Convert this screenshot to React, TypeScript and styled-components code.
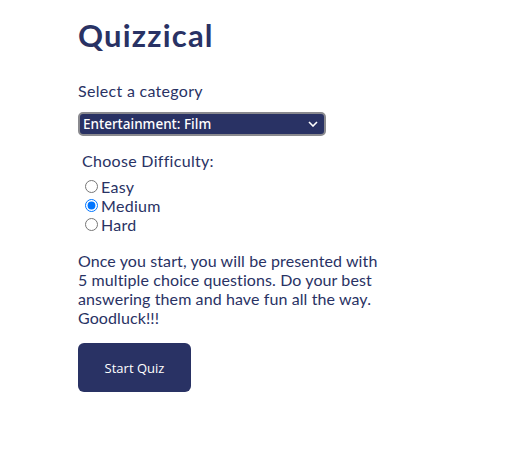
import React, { useState } from "react";
import styled, { createGlobalStyle } from "styled-components";

const Global = createGlobalStyle`
  html, body { margin: 0; padding: 0; background: #ffffff; }
  body { font-family: Lato, "Noto Sans", sans-serif; color: #293264; }
`;

const Page = styled.main`
  display: flex;
  flex-direction: column;
  align-items: flex-start;
  padding: 16px 0 0 78px;
  width: 310px;
`;

const Title = styled.h1`
  margin: 0;
  font-size: 31px;
  font-weight: 700;
  letter-spacing: 1.2px;
  line-height: 38px;
  color: #293264;
`;

const Label = styled.label`
  margin-top: 27px;
  font-size: 16px;
  line-height: 20px;
  letter-spacing: 0.3px;
`;

const Select = styled.select`
  box-sizing: border-box;
  margin-top: 11px;
  width: 248px;
  height: 24px;
  background: #293264;
  color: #ffffff;
  border: 2px solid #8a8a8f;
  border-radius: 5px;
  font-family: "Noto Sans", sans-serif;
  font-size: 13.5px;
  font-weight: 500;
  padding: 0 3px;
  appearance: none;
  background-image: url("data:image/svg+xml;utf8,<svg xmlns='http://www.w3.org/2000/svg' width='10' height='6' viewBox='0 0 10 6'><path d='M1 1l4 4 4-4' fill='none' stroke='white' stroke-width='1.6'/></svg>");
  background-repeat: no-repeat;
  background-position: right 6px center;
`;

const Fieldset = styled.fieldset`
  margin: 15px 0 0 0;
  padding: 0 0 0 4px;
  border: none;
  display: flex;
  flex-direction: column;
`;

const Legend = styled.legend`
  padding: 0;
  font-size: 16px;
  line-height: 20px;
  letter-spacing: 0.3px;
  margin-bottom: 6px;
`;

const Option = styled.label`
  display: flex;
  align-items: center;
  height: 19px;
  font-size: 16px;
  letter-spacing: 0.3px;
`;

const Radio = styled.input`
  margin: 0 3px 0 3px;
  width: 13px;
  height: 13px;
`;

const Text = styled.p`
  margin: 17px 0 0 0;
  font-size: 16px;
  line-height: 19px;
  letter-spacing: 0.1px;
  width: 310px;
`;

const Button = styled.button`
  margin-top: 16px;
  width: 113px;
  height: 49px;
  border: none;
  border-radius: 6px;
  background: #293264;
  color: #ffffff;
  font-family: "Open Sans", sans-serif;
  font-size: 13px;
`;

export default function App() {
  const [level, setLevel] = useState("medium");
  return (
    <>
      <Global />
      <Page>
        <Title>Quizzical</Title>
        <Label htmlFor="cat">Select a category</Label>
        <Select id="cat" defaultValue="film">
          <option value="film">Entertainment: Film</option>
        </Select>
        <Fieldset>
          <Legend>Choose Difficulty:</Legend>
          {["easy", "medium", "hard"].map((l) => (
            <Option key={l}>
              <Radio
                type="radio"
                name="diff"
                checked={level === l}
                onChange={() => setLevel(l)}
              />
              {l[0].toUpperCase() + l.slice(1)}
            </Option>
          ))}
        </Fieldset>
        <Text>
          Once you start, you will be presented with 5 multiple choice
          questions. Do your best answering them and have fun all the way.
          Goodluck!!!
        </Text>
        <Button>Start Quiz</Button>
      </Page>
    </>
  );
}
